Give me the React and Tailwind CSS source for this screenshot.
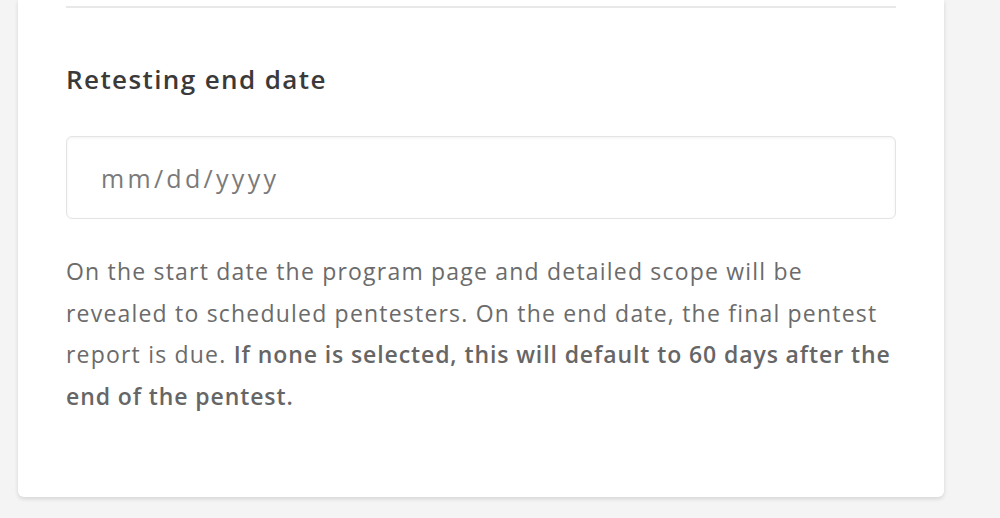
import React from 'react';

const font = { fontFamily: '"Open Sans", Lato, sans-serif' };

function RetestDateField() {
  return (
    <div className="flex flex-col">
      {/* Heading */}
      <h2 className="mt-[53px] text-[26px] leading-[36px] font-semibold tracking-[1.4px] text-[#3a3a3a]">
        Retesting end date
      </h2>

      {/* Date input */}
      <input
        type="text"
        placeholder="mm/dd/yyyy"
        className="mt-[39px] h-[83px] w-full rounded-[6px] border border-[#e4e4e4] bg-white px-[34px] text-[25px] tracking-[3.3px] text-[#444] shadow-[inset_0_1px_3px_rgba(0,0,0,0.06)] outline-none placeholder:text-[#7a7a7a]"
        style={font}
      />

      {/* Help text */}
      <p className="mt-[32px] whitespace-nowrap text-[23px] leading-[41.5px] tracking-[1.2px] text-[#6b6b6b]">
        On the start date the program page and detailed scope will be<br />
        revealed to scheduled pentesters. On the end date, the final pentest<br />
        report is due.{' '}
        <strong className="font-semibold tracking-[0.9px] text-[#666]">
          If none is selected, this will default to 60 days after the<br />
          end of the pentest.
        </strong>
      </p>
    </div>
  );
}

export default function App() {
  return (
    <div className="min-h-[518px] w-full bg-[#f4f4f4]" style={font}>
      <div className="ml-[18px] w-[926px] rounded-b-[6px] bg-white px-[48px] pt-[6px] pb-[80px] shadow-[0_2px_4px_rgba(0,0,0,0.13)]">
        <div className="h-[2px] w-full bg-[#e8e8e8]" />
        <RetestDateField />
      </div>
    </div>
  );
}
